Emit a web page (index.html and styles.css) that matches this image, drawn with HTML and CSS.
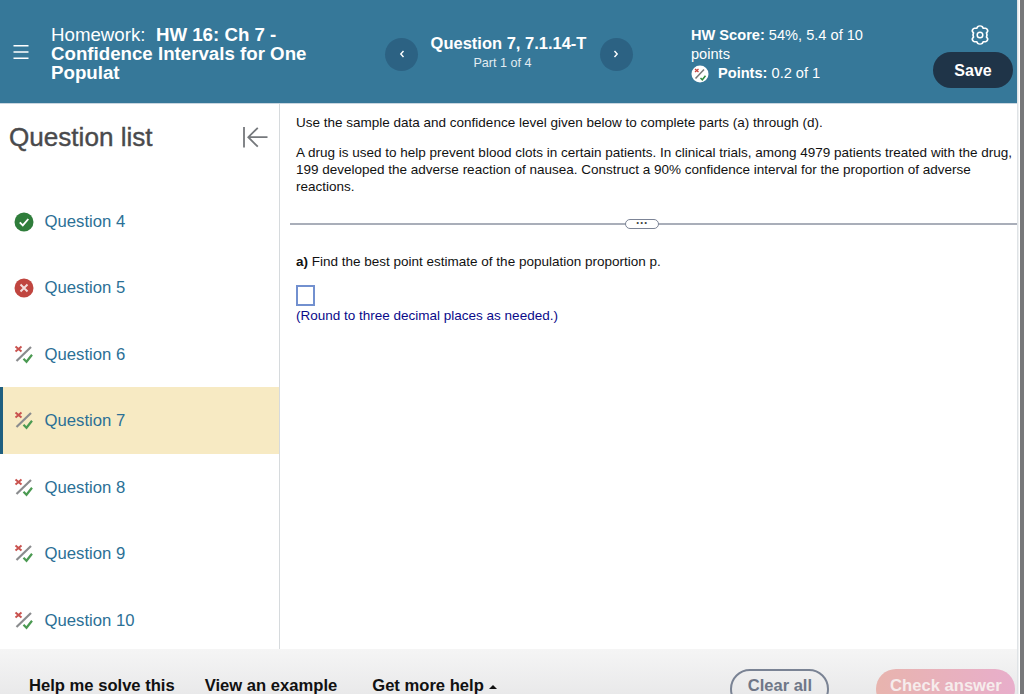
FILE: index.html
```html
<!DOCTYPE html>
<html lang="en">
<head>
<meta charset="utf-8">
<title>HW 16: Ch 7</title>
<link rel="stylesheet" href="styles.css">
</head>
<body>
<div class="app">
  <header class="topbar">
    <button class="menu" aria-label="Menu"><svg width="16" height="14" viewBox="0 0 16 14"><path d="M0.500 .7h15M0.500 7h15M0.500 13.300h15" stroke="#fff" stroke-width="1.400" fill="none"/></svg></button>
    <h1 class="hw-title"><span class="thin">Homework:</span>&nbsp; HW 16: Ch 7 -<br>Confidence Intervals for One<br>Populat</h1>
    <div class="qnav">
      <button class="round" aria-label="Previous"><svg width="8" height="10" viewBox="0 0 8 10"><path d="M5.500 2 2.800 5l2.700 3" stroke="#fff" stroke-width="1.400" fill="none"/></svg></button>
      <div class="qnav-text"><div class="qname">Question 7, 7.1.14-T</div><div class="qpart">Part 1 of 4</div></div>
      <button class="round" aria-label="Next"><svg width="8" height="10" viewBox="0 0 8 10"><path d="M2.500 2 5.200 5 2.500 8" stroke="#fff" stroke-width="1.400" fill="none"/></svg></button>
    </div>
    <div class="score">
      <div><b>HW Score:</b> 54%, 5.4 of 10</div>
      <div>points</div>
      <div class="points"><svg class="pts-icon" width="18" height="18" viewBox="0 0 18 18"><circle cx="9" cy="9" r="8.500" fill="#fff"/><path d="M4.500 13.500 13 4.500" stroke="#777" stroke-width="1.500"/><path d="M4 4l3.500 3M7.500 4 4 7" stroke="#c8453f" stroke-width="1.400"/><path d="M9.500 13l1.800 1.800 3.200-4" stroke="#2f8a3e" stroke-width="1.500" fill="none"/></svg><span><b>Points:</b> 0.2 of 1</span></div>
    </div>
    <div class="actions">
      <svg class="gear" width="20" height="20" viewBox="0 0 20 20"><g transform="translate(10 10) scale(1.140 1) translate(-10 -10)"><path d="M8 1.600C9 .8 11 .8 12 1.600L12.900 3.300 14.800 3.300C16 3.500 17 5.200 16.700 6.400L15.700 8C16.300 9.300 16.300 10.700 15.700 12L16.700 13.600C17 14.800 16 16.500 14.800 16.700L12.900 16.700 12 18.400C11 19.200 9 19.200 8 18.400L7.100 16.700 5.200 16.700C4 16.500 3 14.800 3.300 13.600L4.300 12C3.700 10.700 3.700 9.300 4.300 8L3.300 6.400C3 5.200 4 3.500 5.200 3.300L7.100 3.300Z" fill="none" stroke="#fff" stroke-width="1.500" stroke-linejoin="round"/></g><circle cx="10" cy="10" r="2.800" fill="none" stroke="#fff" stroke-width="1.500"/></svg>
      <button class="save">Save</button>
    </div>
  </header>
  <div class="middle">
    <aside class="sidebar">
      <div class="side-head">
        <h2>Question list</h2>
        <svg width="26" height="21" viewBox="0 0 26 21"><path d="M2 0v20.500M25.500 10.200H6M15.800 .8 6.300 10.200l9.500 9.500" fill="none" stroke="#75787c" stroke-width="1.800"/></svg>
      </div>
      <ul class="qlist">
        <li class="q"><svg width="20" height="20" viewBox="0 0 20 20"><circle cx="10" cy="10" r="9.500" fill="#2f7d3b"/><path d="M5.800 10.300l3 3 5.500-6.300" fill="none" stroke="#fff" stroke-width="1.900"/></svg>Question 4</li>
        <li class="q"><svg width="20" height="20" viewBox="0 0 20 20"><circle cx="10" cy="10" r="9.500" fill="#c0453f"/><path d="M6.500 6.500l7 7M13.500 6.500l-7 7" fill="none" stroke="#f3dcda" stroke-width="2"/></svg>Question 5</li>
        <li class="q"><svg width="20" height="20" viewBox="0 0 20 20"><use href="#partial"/></svg>Question 6</li>
        <li class="q current"><svg width="20" height="20" viewBox="0 0 20 20"><use href="#partial"/></svg>Question 7</li>
        <li class="q"><svg width="20" height="20" viewBox="0 0 20 20"><use href="#partial"/></svg>Question 8</li>
        <li class="q"><svg width="20" height="20" viewBox="0 0 20 20"><use href="#partial"/></svg>Question 9</li>
        <li class="q"><svg width="20" height="20" viewBox="0 0 20 20"><use href="#partial"/></svg>Question 10</li>
      </ul>
    </aside>
    <main class="content">
      <div class="text-block">
        <p class="intro">Use the sample data and confidence level given below to complete parts (a) through (d).</p>
        <p class="problem">A drug is used to help prevent blood clots in certain patients. In clinical trials, among 4979 patients treated with the drug, 199 developed the adverse reaction of nausea. Construct a 90% confidence interval for the proportion of adverse reactions.</p>
      </div>
      <div class="divider"><span class="more">&middot;&middot;&middot;</span></div>
      <div class="text-block">
        <p class="part"><b>a)</b> Find the best point estimate of the population proportion p.</p>
        <div class="answer"></div>
        <p class="hint">(Round to three decimal places as needed.)</p>
      </div>
    </main>
  </div>
  <footer class="bottombar">
    <a class="help first">Help me solve this</a>
    <a class="help second">View an example</a>
    <a class="help third">Get more help <span class="caret"></span></a>
    <button class="clear">Clear all</button>
    <button class="check">Check answer</button>
  </footer>
</div>
<svg class="defs" width="0" height="0"><defs><g id="partial"><path d="M2.500 16 17 2" stroke="#8a8c8e" stroke-width="2.200" fill="none"/><path d="M1.500 1.500l6 5M7.500 1.500l-6 5" stroke="#c9524e" stroke-width="2" fill="none"/><path d="M9.500 13.800l3 3 5.500-7" stroke="#4b9a52" stroke-width="2.200" fill="none"/></g></defs></svg>
</body>
</html>
```
FILE: styles.css
```css
* { box-sizing: border-box; }
html, body { margin: 0; padding: 0; height: 100%; overflow: hidden; background: #fff; }
body { font-family: "Liberation Sans", Arial, sans-serif; color: #111; border-right: 4px solid #77787a; }
button { font-family: inherit; border: 0; padding: 0; }
p, h1, h2, ul { margin: 0; padding: 0; }
.defs { position: absolute; }
.app { width: 1017px; height: 694px; display: flex; flex-direction: column; box-shadow: 1.500px 0 0 #dfe3e6; }
.topbar { height: 104px; flex: none; background: #367899; border-bottom: 1px solid #c9d6e0; color: #fff; display: flex; }
.menu { width: 51px; flex: none; background: none; padding: 45px 0 0 13px; height: 60px; text-align: left; display: block; }
.hw-title { width: 331px; flex: none; padding-top: 25px; font-size: 18.700px; line-height: 19px; font-weight: 700; }
.thin { font-weight: 400; }
.qnav { width: 252px; flex: none; display: flex; align-items: center; justify-content: space-between; padding: 5px 1px 0 3px; height: 103px; }
.round { width: 33px; height: 33px; border-radius: 50%; background: #2c6283; display: flex; align-items: center; justify-content: center; }
.qnav-text { text-align: center; margin-top: -3px; margin-left: -1px; }
.qname { font-size: 16.500px; font-weight: 700; line-height: 20px; }
.qpart { font-size: 12.600px; line-height: 18px; color: #e2ecf2; margin-top: 1px; padding-right: 12px; }
.score { margin-left: 57px; width: 220px; flex: none; padding-top: 26px; font-size: 14.600px; line-height: 19px; }
.points { display: flex; align-items: center; gap: 9px; }
.pts-icon { flex: none; }
.actions { flex: 1; min-width: 0; display: flex; flex-direction: column; align-items: flex-end; padding-top: 25px; padding-right: 4px; margin-left: -36px; }
.gear { margin-right: 23px; display: block; flex: none; overflow: visible; }
.save { width: 80px; height: 36px; border-radius: 18px; background: #1f3448; color: #fff; font-weight: 700; font-size: 16px; margin-top: 7px; flex: none; padding-top: 2px; }
.middle { flex: 1; display: flex; min-height: 0; }
.sidebar { width: 280px; flex: none; border-right: 1px solid #d6dadd; }
.side-head { height: 83.500px; display: flex; align-items: center; justify-content: space-between; padding: 0 11px 17px 9px; }
.side-head h2 { font-size: 26.100px; font-weight: 400; color: #4a4a4c; -webkit-text-stroke: .4px #4a4a4c; }
.qlist { list-style: none; }
.q { height: 66.500px; display: flex; align-items: center; gap: 10.500px; padding: 1.500px 0 0 14px; font-size: 16.700px; color: #2b7096; }
.q svg { flex: none; overflow: visible; }
.current { background: #f7eac3; box-shadow: inset 3px 0 0 #1f5f80; }
.content { flex: 1; min-width: 0; font-size: 13.500px; line-height: 16px; }
.text-block { padding: 11px 0 0 16px; }
.intro { margin-bottom: 13px; }
.problem { line-height: 17px; }
.divider { margin: 24px 0 0 10px; height: 10px; position: relative; }
.divider::before { content: ""; position: absolute; left: 0; right: 0; top: 4px; height: 1.500px; background: #a9aeb9; }
.more { position: absolute; left: 335px; top: 0; width: 34px; height: 10px; border: 1px solid #7c8496; border-radius: 5px; background: #fff; font-size: 12px; line-height: 6px; text-align: center; color: #444; font-weight: 700; }
.part { margin-top: 14px; }
.answer { width: 19px; height: 21px; border: 2px solid #7290cf; margin-top: 15px; background: #fff; }
.hint { color: #0a0a8a; margin-top: 2px; }
.bottombar { height: 45px; flex: none; background: linear-gradient(#f5f5f5, #e9e9ea); display: flex; align-items: flex-start; padding-top: 20px; font-size: 16.600px; font-weight: 700; color: #111; }
.help { white-space: nowrap; line-height: 34px; height: 25px; }
.first { margin-left: 29px; }
.second { margin-left: 30px; }
.third { margin-left: 35px; }
.caret { display: inline-block; width: 0; height: 0; border: 4px solid transparent; border-top: 0; border-bottom: 4px solid #111; vertical-align: 2px; margin-left: 1px; }
.clear { margin-left: 233px; width: 99px; height: 40px; border: 2px solid #7a8394; border-radius: 20px; background: transparent; color: #6f7787; font-size: 16.500px; font-weight: 700; padding-bottom: 7px; }
.check { margin-left: 47px; width: 139px; height: 40px; border-radius: 20px; background: linear-gradient(90deg, #e8b4ae, #e8aecb); color: #f6ecec; font-size: 16.600px; font-weight: 700; padding-bottom: 6px; }
```
